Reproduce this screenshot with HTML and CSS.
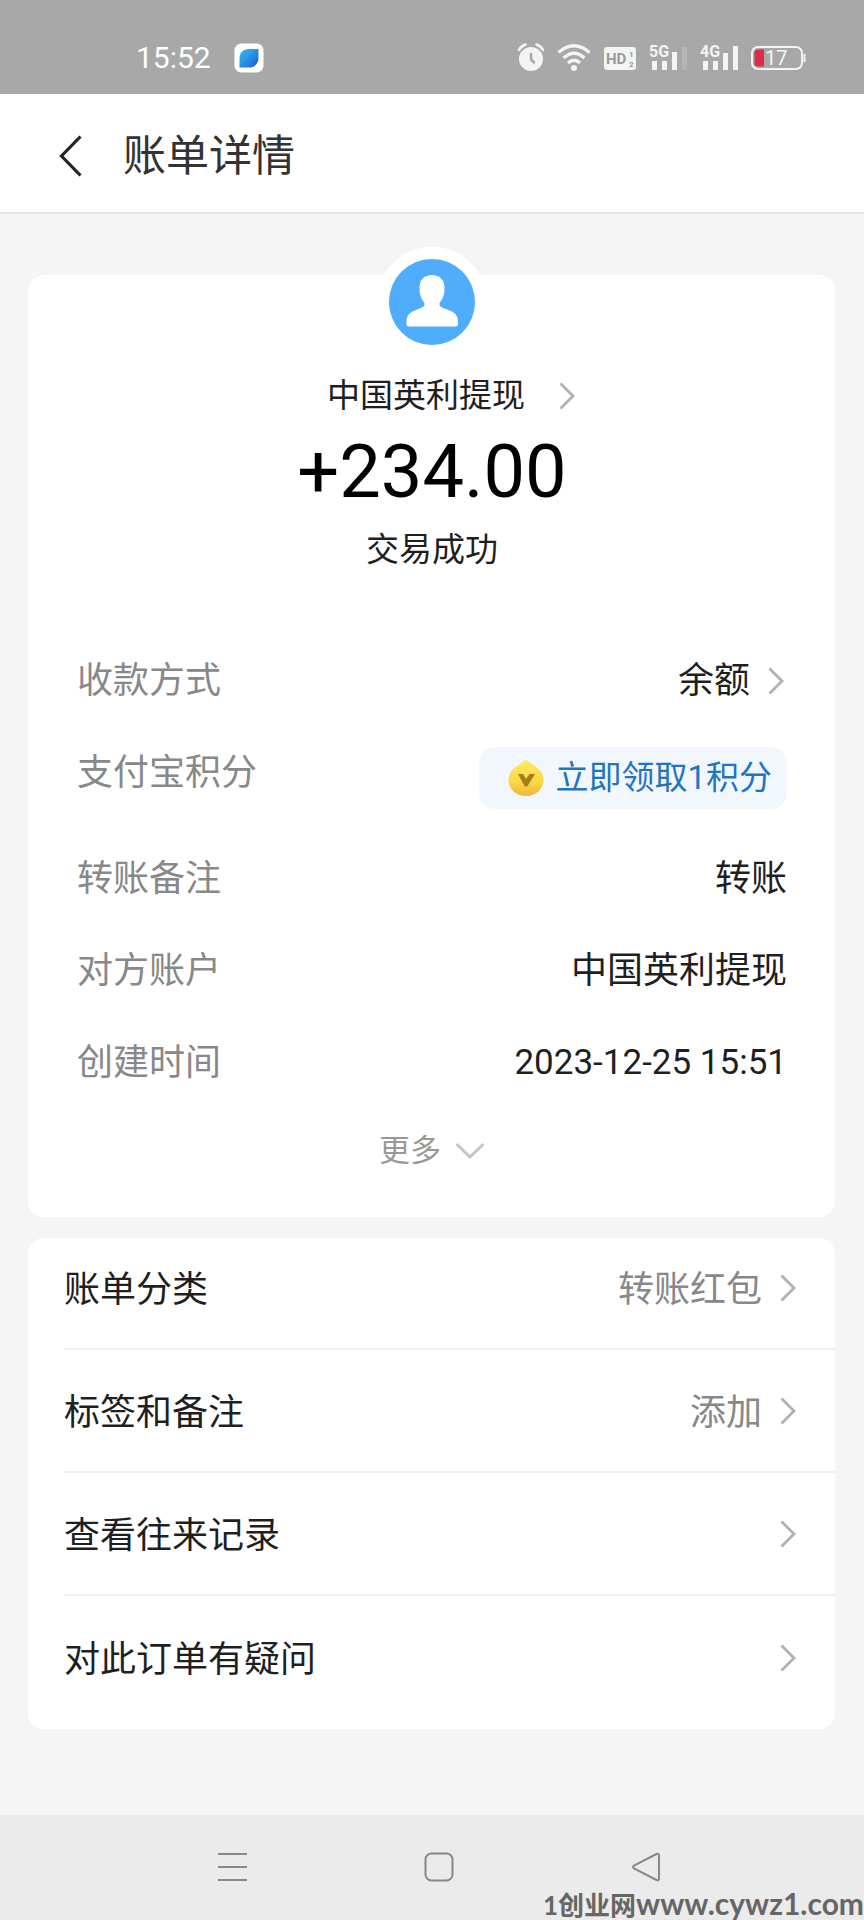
FILE: index.html
```html
<!DOCTYPE html>
<html lang="zh-CN">
<head>
    <meta charset="UTF-8">
    <meta name="viewport" content="width=device-width, initial-scale=1.0">
    <title>账单详情</title>
    <link rel="stylesheet" href="styles.css">
</head>
<body>
    <svg class="sprite" width="0" height="0" aria-hidden="true">
        <symbol id="arrow" viewBox="0 0 16 28">
            <path d="M1.5 1.5L14 14L1.5 26.5" fill="none" stroke="currentColor" stroke-width="2.8"/>
        </symbol>
    </svg>

    <div class="status-bar">
        <span class="time">15:52</span>
        <svg class="app-icon" width="30" height="30" viewBox="0 0 30 30">
            <defs>
                <linearGradient id="leaf" x1="0" y1="0" x2="1" y2="1">
                    <stop offset="0" stop-color="#35b8f0"/>
                    <stop offset="0.5" stop-color="#2795ea"/>
                    <stop offset="1" stop-color="#1c4fd0"/>
                </linearGradient>
            </defs>
            <rect x="0.5" y="0.5" width="29" height="29" rx="7" fill="#fff"/>
            <path d="M24.500 6V15C24.500 21 20 24.500 15 24.500H5.500V15C5.500 9 10 6 15 6Z" fill="url(#leaf)"/>
            <path d="M6 24L23.500 7" stroke="#1f7fe0" stroke-width="0.8"/>
        </svg>
        <div class="status-icons">
            <svg width="28" height="30" viewBox="0 0 28 30">
                <circle cx="15" cy="16" r="12" fill="#f4f4f4"/>
                <path d="M3 7Q5 3 9.500 1.500M27 7Q25 3 20.500 1.500" fill="none" stroke="#a8a8a8" stroke-width="6"/>
                <path d="M3 7Q5 3 9.500 1.500M27 7Q25 3 20.500 1.500" fill="none" stroke="#f4f4f4" stroke-width="2.500" stroke-linecap="round"/>
                <path d="M15 11V16.500L18 19.500" fill="none" stroke="#a8a8a8" stroke-width="2.500" stroke-linecap="round"/>
            </svg>
            <svg width="34" height="30" viewBox="0 0 34 30">
                <g fill="none" stroke="#f4f4f4" stroke-width="3.200">
                    <path d="M1.500 9.500Q17 -4 32.500 9.500"/>
                    <path d="M6.500 15Q17 5.500 27.500 15"/>
                    <path d="M11 20Q17 14.500 23 20"/>
                </g>
                <circle cx="17" cy="25" r="3" fill="#f4f4f4"/>
            </svg>
            <svg class="hd" width="32" height="30" viewBox="0 0 32 30">
                <rect y="4" width="32" height="23" rx="3" fill="#f4f4f4"/>
                <text x="2" y="21" font-size="15">HD</text>
                <text x="25" y="14" font-size="8">1</text>
                <text x="25" y="24" font-size="8">2</text>
            </svg>
            <svg class="signal" width="38" height="30" viewBox="0 0 38 30">
                <path d="M3 18H8V27H3ZM13 18H18V27H13ZM23 9H28V27H23Z" fill="#f4f4f4"/>
                <path d="M33 4H38V27H33Z" fill="#b5b5b5"/>
                <text x="0" y="14" font-size="16">5G</text>
            </svg>
            <svg class="signal" width="38" height="30" viewBox="0 0 38 30">
                <path d="M3 18H8V27H3ZM13 18H18V27H13ZM23 10H28V27H23ZM33 3H38V27H33Z" fill="#f4f4f4"/>
                <text x="0" y="14" font-size="16">4G</text>
            </svg>
            <svg class="battery" width="55" height="30" viewBox="0 0 55 30">
                <rect x="1" y="4" width="50" height="22" rx="6" fill="none" stroke="#f4f4f4" stroke-width="2"/>
                <path d="M53.500 11V19" stroke="#f4f4f4" stroke-width="2"/>
                <path d="M7 6.500H13V23.500H7Q3.500 23.500 3.500 20V10Q3.500 6.500 7 6.500Z" fill="#dc2d46"/>
                <text x="14" y="22" font-size="20">17</text>
            </svg>
        </div>
    </div>

    <header class="header">
        <button class="back" aria-label="返回">
            <svg width="24" height="42" viewBox="0 0 24 42">
                <path d="M21.500 1.500L2.500 21L21.500 40.500" fill="none" stroke="#222" stroke-width="3.200"/>
            </svg>
        </button>
        <h1>账单详情</h1>
    </header>

    <main class="content">
        <section class="card detail">
            <div class="avatar">
                <svg width="86" height="86" viewBox="0 0 86 86">
                    <circle cx="43" cy="43" r="43" fill="#4fadfb"/>
                    <path d="M43 16C51 16 56 21 55.500 30C55.300 37 53 41 50.500 44Q50 47 53 48.500L63 52.500Q69 55.500 69 62V65Q69 67.500 66.500 67.500H20Q17.500 67.500 17.500 65V62Q17.500 55.500 23.500 52.500L33 48.500Q36 47 35.500 44C33 41 30.700 37 30.500 30C30 21 35 16 43 16Z" fill="#fff"/>
                </svg>
            </div>
            <a class="payee" href="#">
                中国英利提现
                <svg class="arrow" width="16" height="28"><use href="#arrow"/></svg>
            </a>
            <div class="amount">+234.00</div>
            <div class="result">交易成功</div>

            <dl class="info">
                <div class="info-row">
                    <dt>收款方式</dt>
                    <dd>
                        <a class="balance" href="#">余额 <svg class="arrow" width="16" height="28"><use href="#arrow"/></svg></a>
                    </dd>
                </div>
                <div class="info-row">
                    <dt>支付宝积分</dt>
                    <dd>
                        <button class="points">
                            <svg width="36" height="38" viewBox="0 0 36 38">
                                <defs>
                                    <linearGradient id="coin" x1="0" y1="0" x2="0" y2="1">
                                        <stop offset="0" stop-color="#fdea62"/>
                                        <stop offset="0.6" stop-color="#fbd848"/>
                                        <stop offset="1" stop-color="#eeb53c"/>
                                    </linearGradient>
                                </defs>
                                <path d="M18 1Q20 1 22 3.500L30 9.500Q35.500 14 35.500 21C35.500 30 28 37 18 37S0.500 30 0.500 21Q0.500 14 6 9.500L14 3.500Q16 1 18 1Z" fill="url(#coin)"/>
                                <path d="M10 15H15L18 20L21.500 15H27L19.500 27Q18 28.500 16.500 27Z" fill="#a77d16"/>
                            </svg>
                            立即领取1积分
                        </button>
                    </dd>
                </div>
                <div class="info-row">
                    <dt>转账备注</dt>
                    <dd>转账</dd>
                </div>
                <div class="info-row">
                    <dt>对方账户</dt>
                    <dd>中国英利提现</dd>
                </div>
                <div class="info-row">
                    <dt>创建时间</dt>
                    <dd class="date">2023-12-25 15:51</dd>
                </div>
            </dl>

            <button class="more">
                更多
                <svg width="30" height="18" viewBox="0 0 30 18">
                    <path d="M1.500 2L15 15L28.500 2" fill="none" stroke="#c4c4c4" stroke-width="2.800"/>
                </svg>
            </button>
        </section>

        <nav class="card menu">
            <a class="menu-row" href="#">
                <span>账单分类</span>
                <span class="value">转账红包</span>
                <svg class="arrow" width="16" height="28"><use href="#arrow"/></svg>
            </a>
            <a class="menu-row" href="#">
                <span>标签和备注</span>
                <span class="value">添加</span>
                <svg class="arrow" width="16" height="28"><use href="#arrow"/></svg>
            </a>
            <a class="menu-row" href="#">
                <span>查看往来记录</span>
                <span class="value"></span>
                <svg class="arrow" width="16" height="28"><use href="#arrow"/></svg>
            </a>
            <a class="menu-row" href="#">
                <span>对此订单有疑问</span>
                <span class="value"></span>
                <svg class="arrow" width="16" height="28"><use href="#arrow"/></svg>
            </a>
        </nav>
    </main>

    <footer class="system-nav">
        <button aria-label="最近任务">
            <svg width="30" height="30" viewBox="0 0 30 30">
                <path d="M1 2H30M1 15H30M1 28H30" stroke="#888" stroke-width="2"/>
            </svg>
        </button>
        <button aria-label="主页">
            <svg width="30" height="30" viewBox="0 0 30 30">
                <rect x="1.500" y="1.500" width="27" height="27" rx="6" fill="none" stroke="#888" stroke-width="2"/>
            </svg>
        </button>
        <button aria-label="返回上一页">
            <svg width="30" height="30" viewBox="0 0 30 30">
                <path d="M25.500 2L3 13.500Q1 15 3 16.500L25.500 28Q28 29 28 26.500V3.500Q28 1 25.500 2Z" fill="none" stroke="#888" stroke-width="2"/>
            </svg>
        </button>
        <div class="watermark">1创业网<span>www.cywz1.com</span></div>
    </footer>
</body>
</html>
```
FILE: styles.css
```css
* {
    box-sizing: border-box;
}
body {
    margin: 0;
    min-height: 100vh;
    display: flex;
    flex-direction: column;
    background-color: #f5f5f5;
    color: #1f1f1f;
    font-family: Roboto, "Noto Sans CJK SC", sans-serif;
    font-size: 36px;
    line-height: 52px;
}
svg {
    display: block;
    flex-shrink: 0;
}
.sprite {
    position: absolute;
}
button {
    padding: 0;
    border: none;
    background: none;
    color: inherit;
    font: inherit;
    cursor: pointer;
}
a {
    color: inherit;
    text-decoration: none;
}
.arrow {
    color: #b0b0b0;
}

/* status bar */
.status-bar {
    height: 94px;
    padding: 22px 58px 0 136px;
    display: flex;
    align-items: center;
    background-color: #a8a8a8;
    color: white;
}
.time {
    font-size: 30px;
}
.app-icon {
    margin-left: 23px;
}
.status-icons {
    margin-left: auto;
    display: flex;
    gap: 13px;
}
.status-icons text {
    font-weight: bold;
    fill: #f4f4f4;
}
.status-icons .hd text {
    fill: #999;
}
.status-icons .battery text {
    font-weight: normal;
}

/* header */
.header {
    height: 120px;
    padding: 6px 0 0 59px;
    display: flex;
    align-items: center;
    gap: 40px;
    background-color: white;
    border-bottom: 2px solid #e4e4e4;
}
h1 {
    margin: 0;
    font-size: 43px;
    font-weight: normal;
    color: #333;
}

/* cards */
.content {
    flex: 1;
    padding: 61px 29px 86px 28px;
    display: flex;
    flex-direction: column;
    gap: 21px;
}
.card {
    background-color: white;
    border-radius: 16px;
}
.detail {
    padding: 0 48px 44px 49px;
    display: flex;
    flex-direction: column;
    align-items: center;
}
.avatar {
    margin-top: -28px;
    border: 12px solid white;
    border-radius: 50%;
}
.payee {
    margin: 17px 0 0 38px;
    display: flex;
    align-items: center;
    gap: 34px;
    font-size: 33px;
    line-height: 44px;
}
.amount {
    margin-top: 14px;
    font-size: 74px;
    line-height: 80px;
    color: black;
}
.result {
    margin-top: 16px;
    font-size: 33px;
    line-height: 44px;
}
.info {
    width: 100%;
    margin: 83px 0 0;
    display: flex;
    flex-direction: column;
    gap: 40px;
}
.info-row {
    display: flex;
    justify-content: space-between;
}
.info dt {
    color: #888;
}
.info dd {
    margin: 0;
}
.info .date {
    font-size: 35px;
}
.balance {
    padding-right: 3px;
    display: flex;
    align-items: center;
    gap: 18px;
}
.points {
    height: 62px;
    margin-bottom: 4px;
    padding: 0 15px 0 29px;
    display: flex;
    align-items: center;
    gap: 11px;
    border-radius: 16px;
    background-color: #f2f7fe;
    color: #1f74c4;
    font-size: 33px;
}
.more {
    margin-top: 40px;
    display: flex;
    align-items: center;
    gap: 14px;
    color: #999;
    font-size: 31px;
    line-height: 44px;
}

/* menu */
.menu {
    padding: 0 0 10px 36px;
}
.menu-row {
    height: 123px;
    padding-right: 39px;
    display: flex;
    align-items: center;
    border-bottom: 2px solid #f0f0f0;
}
.menu-row:first-child {
    height: 112px;
    padding-bottom: 10px;
}
.menu-row:last-child {
    border-bottom: none;
}
.menu-row span {
    padding-top: 4px;
}
.value {
    margin: 0 18px 0 auto;
    color: #888;
}

/* system navigation */
.system-nav {
    position: relative;
    height: 105px;
    padding: 0 203px 2px 217px;
    display: flex;
    align-items: center;
    justify-content: space-between;
    background-color: #ebebeb;
}
.watermark {
    position: absolute;
    right: 0;
    bottom: 0;
    color: #666;
    font-family: Lato, "Noto Sans CJK SC", sans-serif;
    font-size: 26px;
    font-weight: bold;
    line-height: 30px;
    white-space: nowrap;
}
.watermark span {
    font-size: 30px;
}
```
